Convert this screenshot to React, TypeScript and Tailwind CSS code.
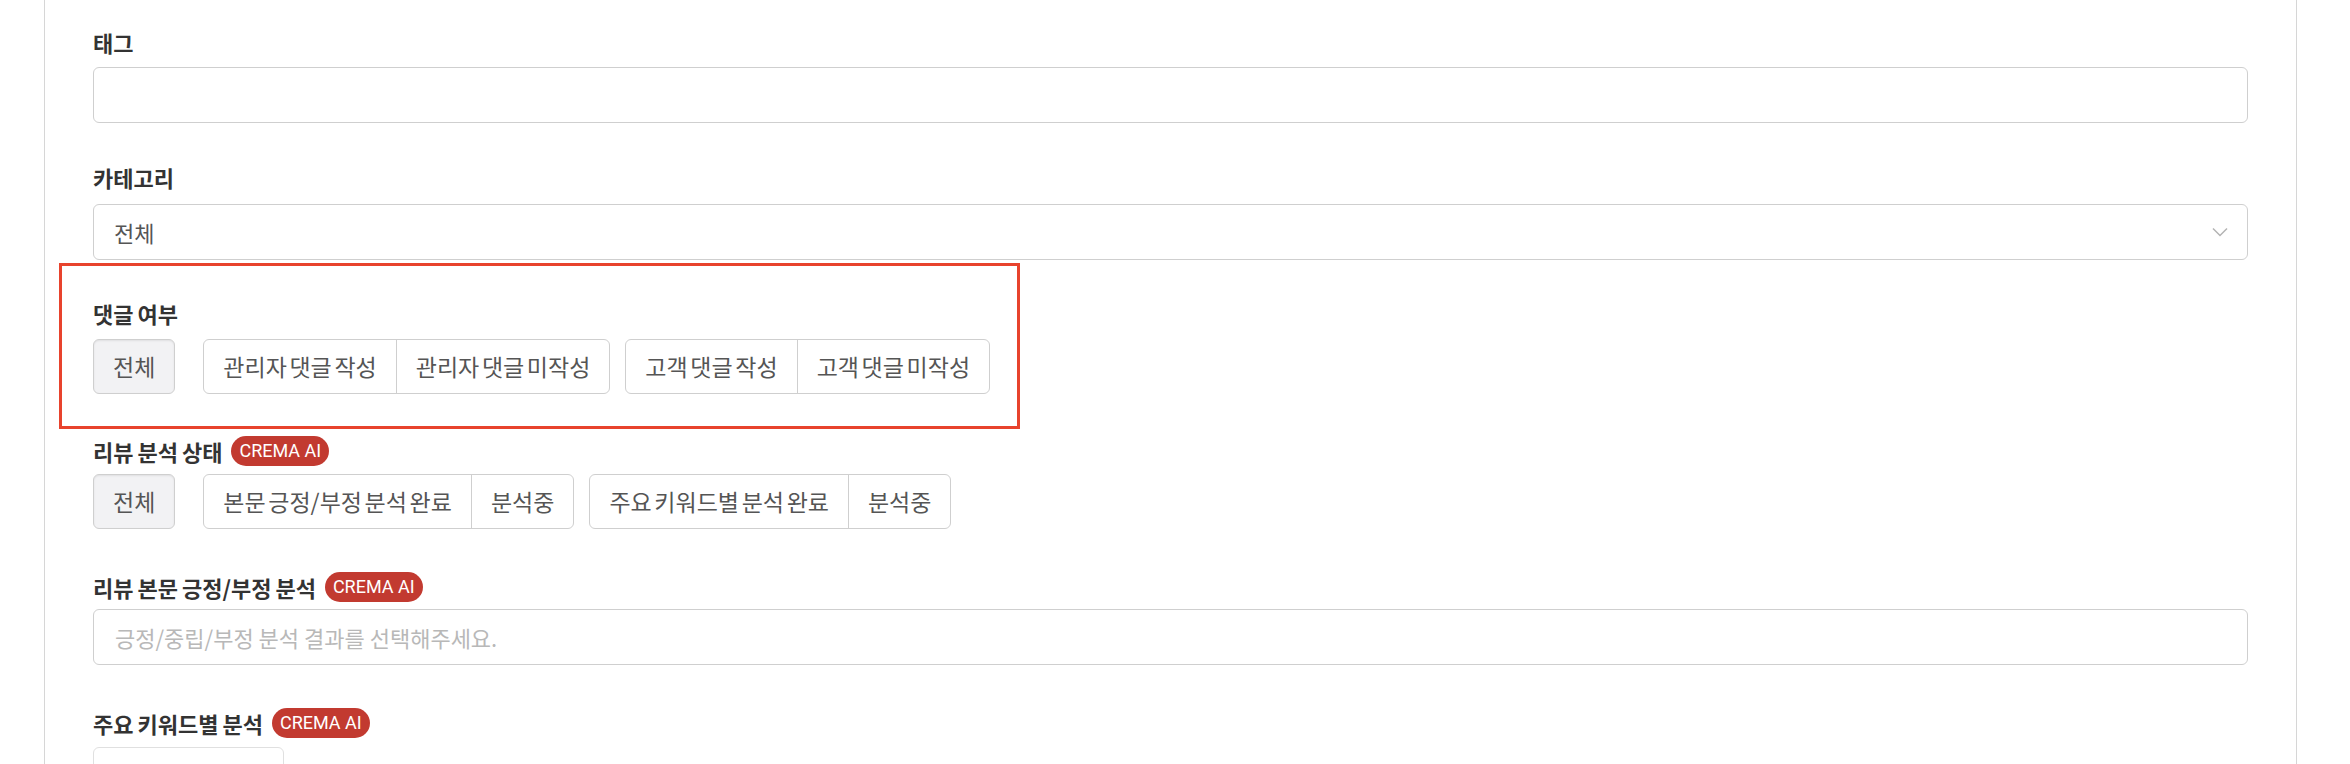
import React from "react";

function Badge() {
  return (
    <span className="flex h-[30px] items-center rounded-full bg-[#c23a30] px-[8px] font-['Roboto',sans-serif] text-[18px] leading-none text-white">
      CREMA AI
    </span>
  );
}

function Label({ children, ai }: { children: React.ReactNode; ai?: boolean }) {
  return (
    <div className="flex h-[30px] items-center gap-[9px]">
      <span className="text-[22px] font-bold leading-none text-[#333333] [word-spacing:-1px]">
        {children}
      </span>
      {ai && <Badge />}
    </div>
  );
}

function Btn({
  children,
  first,
}: {
  children: React.ReactNode;
  first?: boolean;
}) {
  return (
    <div
      className={
        first
          ? "flex h-full items-center px-[19px] text-[23px] leading-none text-[#555555] [word-spacing:-2.5px]"
          : "flex h-full items-center border-l border-[#cfcfcf] px-[19px] text-[23px] leading-none text-[#555555] [word-spacing:-2.5px]"
      }
    >
      {children}
    </div>
  );
}

function Group({ items }: { items: string[] }) {
  return (
    <div className="flex h-[55px] overflow-hidden rounded-[6px] border border-[#cfcfcf] bg-white">
      {items.map((t, i) => (
        <Btn key={t + i} first={i === 0}>
          {t}
        </Btn>
      ))}
    </div>
  );
}

function AllBtn() {
  return (
    <div className="flex h-[55px] items-center rounded-[6px] border border-[#cfcfcf] bg-[#f2f2f4] px-[19px] text-[23px] leading-none text-[#555555] shadow-[inset_0_1px_2px_rgba(0,0,0,0.08)]">
      전체
    </div>
  );
}

export default function App() {
  return (
    <div className="min-h-screen bg-white font-['Noto_Sans_CJK_KR','Noto_Sans',sans-serif]">
      <div className="ml-[44px] mr-[53px] min-h-[764px] border-x border-[#d6d6d6] px-[48px] pb-[40px] pt-[27px]">
        {/* 태그 */}
        <Label>태그</Label>
        <input
          className="mt-[10px] block h-[56px] w-full rounded-[6px] border border-[#cfcfcf] bg-white px-[21px] text-[22px] text-[#555555] outline-none"
          type="text"
        />

        {/* 카테고리 */}
        <div className="mt-[39px]">
          <Label>카테고리</Label>
        </div>
        <div className="mt-[12px] flex h-[56px] w-full items-center justify-between rounded-[6px] border border-[#cfcfcf] bg-white pl-[20px] pr-[19px]">
          <span className="text-[22px] leading-none text-[#555555]">전체</span>
          <svg width="16" height="10" viewBox="0 0 16 10" fill="none">
            <polyline
              points="1,1.5 8,8.5 15,1.5"
              stroke="#b3b3b3"
              strokeWidth="1.5"
              fill="none"
            />
          </svg>
        </div>

        {/* 댓글 여부 (highlighted) */}
        <div className="-ml-[34px] mt-[3px] w-fit border-[3px] border-[#e8432d] pb-[32px] pl-[31px] pr-[27px] pt-[32px]">
          <Label>댓글 여부</Label>
          <div className="mt-[11px] flex items-center">
            <AllBtn />
            <div className="ml-[28px]">
              <Group items={["관리자 댓글 작성", "관리자 댓글 미작성"]} />
            </div>
            <div className="ml-[15px]">
              <Group items={["고객 댓글 작성", "고객 댓글 미작성"]} />
            </div>
          </div>
        </div>

        {/* 리뷰 분석 상태 */}
        <div className="mt-[7px]">
          <Label ai>리뷰 분석 상태</Label>
        </div>
        <div className="mt-[8px] flex items-center">
          <AllBtn />
          <div className="ml-[28px]">
            <Group items={["본문 긍정/부정 분석 완료", "분석중"]} />
          </div>
          <div className="ml-[15px]">
            <Group items={["주요 키워드별 분석 완료", "분석중"]} />
          </div>
        </div>

        {/* 리뷰 본문 긍정/부정 분석 */}
        <div className="mt-[43px]">
          <Label ai>리뷰 본문 긍정/부정 분석</Label>
        </div>
        <input
          className="mt-[7px] block h-[56px] w-full rounded-[6px] border border-[#cfcfcf] bg-white px-[21px] text-[22px] text-[#555555] outline-none placeholder:text-[#b8b8b8]"
          type="text"
          placeholder="긍정/중립/부정 분석 결과를 선택해주세요."
        />

        {/* 주요 키워드별 분석 */}
        <div className="mt-[43px]">
          <Label ai>주요 키워드별 분석</Label>
        </div>
        <div className="mt-[9px] flex">
          <div className="flex h-[55px] items-center rounded-[6px] border border-[#e0e0e0] bg-white px-[19px] text-[23px] leading-none text-[#555555] [word-spacing:-2.5px]">
            키워드 선택하기
          </div>
        </div>
      </div>
    </div>
  );
}
